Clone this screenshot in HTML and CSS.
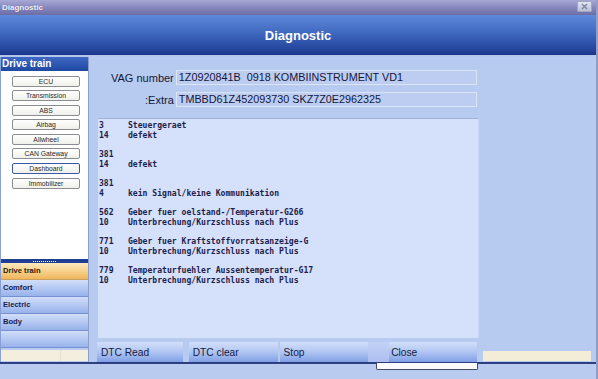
FILE: index.html
```html
<!DOCTYPE html>
<html>
<head>
<meta charset="utf-8">
<link rel="stylesheet" href="styles.css">
</head>
<body>
<div class="win">
  <div class="titlebar">
    <span class="title-text">Diagnostic</span>
    <div class="xbtn"><svg width="11" height="7" viewBox="0 0 11 7"><path d="M3 1 L8 6 M8 1 L3 6" stroke="#7d84a0" stroke-width="1.4"/></svg></div>
  </div>
  <div class="header">Diagnostic</div>
  <div class="body">
    <aside class="side">
      <div class="side-head">Drive train</div>
      <div class="side-list">
        <div class="mod">ECU</div>
        <div class="mod">Transmission</div>
        <div class="mod">ABS</div>
        <div class="mod">Airbag</div>
        <div class="mod">Allwheel</div>
        <div class="mod">CAN Gateway</div>
        <div class="mod sel">Dashboard</div>
        <div class="mod">Immobilizer</div>
      </div>
      <div class="grip"><span></span></div>
      <div class="nav">
        <div class="nav-item active">Drive train</div>
        <div class="nav-item">Comfort</div>
        <div class="nav-item">Electric</div>
        <div class="nav-item">Body</div>
        <div class="nav-item"></div>
      </div>
      <div class="cream"><span></span></div>
    </aside>
    <main class="main">
      <div class="center">
        <div class="row">
          <div class="lbl">VAG number</div>
          <div class="field">1Z0920841B&nbsp; 0918 KOMBIINSTRUMENT VD1</div>
        </div>
        <div class="row">
          <div class="lbl">:Extra</div>
          <div class="field">TMBBD61Z452093730 SKZ7Z0E2962325</div>
        </div>
        <div class="log">
          <div class="ln"><span>3</span><span>Steuergeraet</span></div>
          <div class="ln"><span>14</span><span>defekt</span></div>
          <div class="ln"></div>
          <div class="ln"><span>381</span><span></span></div>
          <div class="ln"><span>14</span><span>defekt</span></div>
          <div class="ln"></div>
          <div class="ln"><span>381</span><span></span></div>
          <div class="ln"><span>4</span><span>kein Signal/keine Kommunikation</span></div>
          <div class="ln"></div>
          <div class="ln"><span>562</span><span>Geber fuer oelstand-/Temperatur-G266</span></div>
          <div class="ln"><span>10</span><span>Unterbrechung/Kurzschluss nach Plus</span></div>
          <div class="ln"></div>
          <div class="ln"><span>771</span><span>Geber fuer Kraftstoffvorratsanzeige-G</span></div>
          <div class="ln"><span>10</span><span>Unterbrechung/Kurzschluss nach Plus</span></div>
          <div class="ln"></div>
          <div class="ln"><span>779</span><span>Temperaturfuehler Aussentemperatur-G17</span></div>
          <div class="ln"><span>10</span><span>Unterbrechung/Kurzschluss nach Plus</span></div>
        </div>
        <div class="btnbar">
          <div class="btn b-read">DTC Read</div>
          <div class="btn b-clear">DTC clear</div>
          <div class="btn b-stop">Stop</div>
          <div class="btn-gap"></div>
          <div class="btn b-close">Close</div>
        </div>
      </div>
      <div class="right">
        <div class="cream-r"></div>
      </div>
    </main>
  </div>
  <div class="footer">
    <div class="dropbar"></div>
  </div>
</div>
</body>
</html>
```
FILE: styles.css
```css
* { box-sizing: border-box; }
html, body { margin: 0; padding: 0; }
body {
  width: 598px;
  height: 379px;
  overflow: hidden;
  background: #b9cbee;
  font-family: "Liberation Sans", Arial, sans-serif;
}
.win {
  width: 598px;
  height: 379px;
  display: flex;
  flex-direction: column;
  border-right: 2px solid #8f9fc6;
  background: #b9cbee;
}
.titlebar {
  height: 15px;
  background: linear-gradient(#a9a9d6, #8a8ac0 45%, #6d6da6);
  display: flex;
  align-items: center;
  justify-content: space-between;
  padding: 0 4px 0 2px;
}
.title-text {
  color: #f2f2fb;
  font-weight: bold;
  font-size: 8px;
  text-shadow: 0 0 1px #5a5a90;
}
.xbtn {
  width: 15px;
  height: 11px;
  margin-top: -2px;
  background: linear-gradient(#e2e6f2, #b9bfd6);
  border: 1px solid #9ea6c2;
  border-radius: 1px;
  display: flex;
  align-items: center;
  justify-content: center;
}
.header {
  height: 42px;
  background: linear-gradient(#5f89db, #3f68c0 45%, #23449a 88%, #1a358a);
  border-bottom: 2px solid #b4c8ef;
  color: #ffffff;
  font-weight: bold;
  font-size: 13px;
  display: flex;
  align-items: center;
  justify-content: center;
  padding-top: 1px;
}
.body {
  display: flex;
  height: 305px;
}
.side {
  width: 89px;
  display: flex;
  flex-direction: column;
  border-left: 1px solid #8aa0d4;
  border-right: 1px solid #8ea0c8;
  background: #ffffff;
}
.side-head {
  height: 14px;
  background: linear-gradient(#3e68c4, #1f48a2);
  color: #fff;
  font-weight: bold;
  font-size: 10px;
  line-height: 14px;
  padding-left: 1px;
}
.side-list {
  height: 188px;
  padding: 4.5px 0 0 11px;
  display: flex;
  flex-direction: column;
  gap: 3.6px;
}
.mod {
  width: 68px;
  height: 11px;
  border: 1px solid #8c8c94;
  border-radius: 2px;
  background: linear-gradient(#ffffff, #f0f0ea);
  font-size: 6.8px;
  line-height: 9px;
  text-align: center;
  color: #2a2a2a;
}
.mod.sel { border-color: #3a57a8; }
.grip {
  height: 4px;
  background: #1e3f94;
  display: flex;
  justify-content: center;
  align-items: center;
}
.grip span {
  width: 24px;
  height: 1px;
  background: repeating-linear-gradient(90deg, #ffffff 0 1px, transparent 1px 2px);
}
.nav { display: flex; flex-direction: column; }
.nav-item {
  height: 17px;
  background: linear-gradient(#d2def9, #afc4f1 60%, #98b2eb);
  border-bottom: 1px solid #7690d2;
  font-size: 7.6px;
  font-weight: bold;
  color: #1c2152;
  line-height: 16px;
  padding-left: 2px;
}
.nav-item.active {
  background: linear-gradient(#fde8bf, #f7cf86 55%, #efb65d);
  border-bottom-color: #c8a060;
  color: #2a2010;
}
.cream {
  height: 14px;
  background: #b9cbee;
  padding-top: 2px;
  display: flex;
}
.cream span {
  flex: 1;
  height: 11px;
  background: linear-gradient(90deg, #f3eedd 0 68%, #e6e2d2 68% 69%, #f3eedd 69%);
}
.main {
  flex: 1;
  display: flex;
  background: #b7caef;
}
.center {
  width: 388px;
  padding: 13px 0 0 8px;
  display: flex;
  flex-direction: column;
}
.row {
  display: flex;
  height: 15px;
  margin-bottom: 7px;
  align-items: center;
}
.lbl {
  width: 79px;
  text-align: right;
  padding-right: 2px;
  font-size: 11px;
  color: #14163a;
}
.field {
  width: 302px;
  height: 15px;
  background: #bccdf1;
  border: 1px solid #dce5f8;
  font-size: 10.8px;
  line-height: 13px;
  padding-left: 2px;
  color: #14163a;
  white-space: nowrap;
}
.log {
  margin-top: 4px;
  width: 381px;
  height: 220px;
  margin-left: 1px;
  background: #d5e0fb;
  border-top: 1px solid #9fb1da;
  border-right: 1px solid #c6d3f2;
  box-shadow: 1px 0 1px #c0cdec;
  padding: 2px 0 0 1px;
  font-family: "DejaVu Sans Mono", "Liberation Mono", monospace;
  font-weight: bold;
  font-size: 8.1px;
  color: #1c1e4c;
}
.ln {
  display: grid;
  grid-template-columns: 29px auto;
  height: 9.7px;
  line-height: 9.7px;
  white-space: pre;
}
.btnbar {
  margin-top: 4px;
  height: 20px;
  display: flex;
}
.btn {
  height: 20px;
  background: linear-gradient(#d3def9, #b4c8f3 45%, #8fabea 85%, #7f9de4);
  font-size: 10.2px;
  color: #161a40;
  line-height: 21px;
  padding-left: 4px;
}
.b-read { width: 86px; }
.b-clear { width: 89px; margin-left: 6px; }
.b-stop { width: 89px; margin-left: 2px; }
.btn-gap {
  width: 21px;
  height: 20px;
  background: linear-gradient(#c2d1f4, #aebff0);
}
.b-close { width: 88px; padding-left: 2px; }
.right {
  flex: 1;
  display: flex;
  flex-direction: column;
  justify-content: flex-end;
  padding: 0 5px 1px 6px;
}
.cream-r {
  height: 10px;
  background: #f3edd8;
}
.footer {
  flex: 1;
  border-top: 2px solid #2c3f82;
  background: #b9cbee;
  position: relative;
}
.dropbar {
  position: absolute;
  left: 376px;
  top: -1px;
  width: 102px;
  height: 7px;
  background: #fbfbff;
  border: 1px solid #45486a;
  border-top: none;
  border-radius: 0 0 2px 2px;
}
```
